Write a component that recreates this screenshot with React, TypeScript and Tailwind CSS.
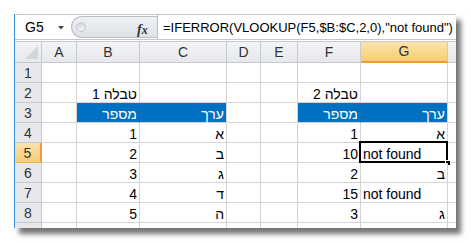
import React from "react";

type C = { t?: string; a?: "l" | "r"; blue?: boolean; rtl?: boolean; sel?: boolean };

const colW = ["w-[35px]", "w-[63px]", "w-[87px]", "w-[34px]", "w-[37px]", "w-[63px]", "w-[87px]"];
const letters = ["A", "B", "C", "D", "E", "F", "G"];

const h = (t: string): C => ({ t, a: "r", rtl: true });
const n = (t: string): C => ({ t, a: "r" });
const E: C = {};

const rows: C[][] = [
  [E, E, E, E, E, E, E],
  [E, h("טבלה 1"), E, E, E, h("טבלה 2"), E],
  [E, { t: "מספר", a: "r", rtl: true, blue: true }, { t: "ערך", a: "r", rtl: true, blue: true }, E, E, { t: "מספר", a: "r", rtl: true, blue: true }, { t: "ערך", a: "r", rtl: true, blue: true }],
  [E, n("1"), h("א"), E, E, n("1"), h("א")],
  [E, n("2"), h("ב"), E, E, n("10"), { t: "not found", a: "l", sel: true }],
  [E, n("3"), h("ג"), E, E, n("2"), h("ב")],
  [E, n("4"), h("ד"), E, E, n("15"), { t: "not found", a: "l" }],
  [E, n("5"), h("ה"), E, E, n("3"), h("ג")],
];

function Cell({ c, w, nextBlue }: { c: C; w: string; nextBlue?: boolean }) {
  const border = c.blue && nextBlue ? "border-r-[#0070c0]" : "border-r-[#d4d4d4]";
  return (
    <div
      className={`${w} h-full shrink-0 border-r border-b border-b-[#d4d4d4] ${border} relative flex items-center ${
        c.blue ? "bg-[#0070c0] text-white" : "bg-white text-black"
      } ${c.a === "l" ? "justify-start pl-[2px]" : "justify-end pr-[2px]"}`}
    >
      {c.t && (
        <span dir={c.rtl ? "rtl" : "ltr"} className="whitespace-nowrap leading-none pt-[2px]">
          {c.t}
        </span>
      )}
      {c.sel && (
        <>
          <div className="absolute left-[-2px] top-[-2px] right-[-1px] bottom-[-1px] border-2 border-black pointer-events-none" />
          <div className="absolute right-[-4px] bottom-[-4px] w-[6px] h-[6px] bg-black border border-white" />
        </>
      )}
    </div>
  );
}

export default function App() {
  return (
    <div className="w-[471px] h-[243px] bg-white overflow-hidden pl-[14px] pt-[14px] font-['Liberation_Sans',sans-serif] text-[14px]">
      <div className="w-[442px] h-[214px] bg-white border-l border-l-[#3a8ee6] shadow-[5px_6px_5px_rgba(0,0,0,0.55)] flex flex-col overflow-hidden">
        {/* formula bar */}
        <div className="h-[26px] shrink-0 border-t border-b border-[#c4c7cc] flex items-stretch bg-white">
          <div className="w-[56px] shrink-0 flex items-center pl-[10px] text-[14px] text-black relative">
            <span className="pt-[1px]">G5</span>
            <svg className="absolute left-[43px] top-[11px]" width="6" height="4" viewBox="0 0 6 4">
              <path d="M0 0 L6 0 L3 3.5 Z" fill="#444" />
            </svg>
          </div>
          <div className="w-[86px] shrink-0 my-[1px] rounded-l-full bg-gradient-to-b from-[#eef0f3] to-[#dfe3e8] border border-r-0 border-[#b9bec6] flex items-center relative">
            <div className="ml-[4px] w-[10px] h-[10px] rounded-full bg-gradient-to-b from-[#d3d7dc] to-[#f3f4f6] border border-[#c3c7cd]" />
            <span className="absolute left-[65px] top-[2px] font-['Liberation_Serif',serif] italic font-bold text-[14px] text-[#333]">
              f<span className="text-[12px]">x</span>
            </span>
          </div>
          <div className="w-px bg-[#b9bec6] shrink-0" />
          <div className="flex-1 flex items-center pl-[5px] text-[13px] text-black whitespace-nowrap">
            <span className="pt-[1px]">=IFERROR(VLOOKUP(F5,$B:$C,2,0),"not found")</span>
          </div>
        </div>
        <div className="h-[1px] shrink-0 bg-white" />
        {/* column header */}
        <div className="h-[22px] shrink-0 flex border-t border-b border-[#c6c9ce] bg-gradient-to-b from-[#f3f4f6] to-[#e6e8eb]">
          <div className="w-[27px] shrink-0 border-r border-[#c6c9ce] relative">
            <svg className="absolute right-[3px] bottom-[3px]" width="13" height="13" viewBox="0 0 13 13">
              <path d="M13 0 L13 13 L0 13 Z" fill="#d2d5da" />
            </svg>
          </div>
          {letters.map((l, i) =>
            l === "G" ? (
              <div
                key={l}
                className={`${colW[i]} shrink-0 border-r border-[#c6c9ce] border-b-2 border-b-[#f29a3d] bg-gradient-to-b from-[#fbe3ad] to-[#f6cd72] flex items-center justify-center text-[#333] mb-[-1px]`}
              >
                {l}
              </div>
            ) : (
              <div key={l} className={`${colW[i]} shrink-0 border-r border-[#c6c9ce] flex items-center justify-center text-[#333]`}>
                {l}
              </div>
            )
          )}
          <div className="flex-1" />
        </div>
        {/* rows */}
        {rows.map((r, ri) => (
          <div key={ri} className="h-[20px] shrink-0 flex">
            <div
              className={`w-[27px] shrink-0 border-r border-b flex items-center justify-center ${
                ri === 4
                  ? "bg-gradient-to-b from-[#fbe3ad] to-[#f6cd72] border-r-2 border-r-[#f29a3d] border-b-[#e5b45a] w-[27px]"
                  : "bg-[#e6e8ec] border-[#c6c9ce]"
              } text-[#333]`}
            >
              <span className="pt-[1px]">{ri + 1}</span>
            </div>
            {r.map((c, ci) => (
              <Cell key={ci} c={c} w={colW[ci]} nextBlue={r[ci + 1]?.blue} />
            ))}
            <div className="flex-1 border-b border-[#d4d4d4] bg-white" />
          </div>
        ))}
        <div className="h-[5px] shrink-0 flex">
          <div className="w-[27px] shrink-0 border-r border-[#c6c9ce] bg-[#e6e8ec]" />
          {colW.map((w, i) => (
            <div key={i} className={`${w} shrink-0 border-r border-[#d4d4d4]`} />
          ))}
        </div>
      </div>
    </div>
  );
}
